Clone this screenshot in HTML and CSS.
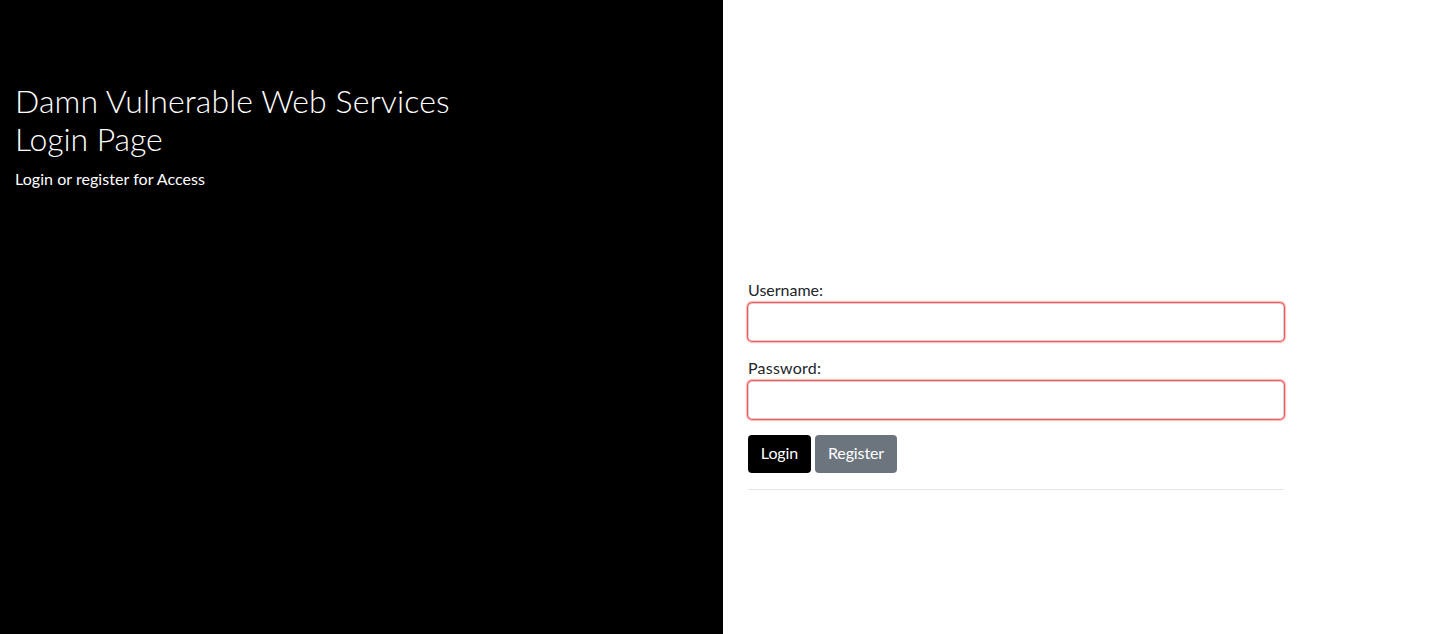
FILE: index.html
```html
<!DOCTYPE html>
<html lang="en">
<head>
<meta charset="utf-8">
<title>Login</title>
<link rel="stylesheet" href="styles.css">
</head>
<body>
<div class="page">
  <aside class="sidenav">
    <h2 class="heading"><span class="heading-main">Damn Vulnerable Web Services</span><br><span class="heading-sub">Login Page</span></h2>
    <p class="lead">Login or register for Access</p>
  </aside>
  <main class="main">
    <form class="login-form">
      <div class="form-group">
        <label for="username">Username:</label>
        <input class="form-control" id="username" type="text" required>
      </div>
      <div class="form-group">
        <label class="label-password" for="password">Password:</label>
        <input class="form-control" id="password" type="password" required>
      </div>
      <div class="actions">
        <button class="btn btn-black" type="submit">Login</button>
        <button class="btn btn-secondary" type="button">Register</button>
      </div>
      <hr class="divider">
    </form>
  </main>
</div>
</body>
</html>
```

FILE: styles.css
```css
* { box-sizing: border-box; }
body {
  margin: 0;
  background: #fff;
  color: #212529;
  font-family: Lato, sans-serif;
  font-size: 16px;
  line-height: 24px;
}
.page { display: flex; height: 634px; overflow: hidden; }
.sidenav {
  width: 723px;
  flex: none;
  padding: 82px 15px 0;
  background: #000;
  color: #fff;
}
.heading {
  margin: 0 0 8px;
  font-size: 32px;
  font-weight: 300;
  line-height: 38.4px;
}
.heading-main { letter-spacing: 0.11px; }
.heading-sub { letter-spacing: -0.08px; }
.lead { margin: 0; letter-spacing: 0.05px; }
.main { padding: 278px 0 0 25px; }
.login-form { width: 536px; }
.form-group { display: flex; flex-direction: column; height: 63px; margin-bottom: 15px; }
label { display: block; height: 25px; }
.label-password { letter-spacing: 0.22px; }
.form-control {
  display: block;
  width: 100%;
  height: 38px;
  margin: 0;
  padding: 6px 12px;
  border: 1px solid #ced4da;
  border-radius: 4px;
  background: #fff;
  font: inherit;
  box-shadow: 0 0 2px 1px rgba(255, 0, 0, 0.9);
}
.actions { display: flex; gap: 4px; padding-top: 1px; }
.btn {
  height: 38px;
  padding: 5px 0 7px;
  border: 0;
  border-radius: 4px;
  color: #fff;
  font: inherit;
  text-align: center;
}
.btn-black { width: 63px; background: #000; letter-spacing: -0.1px; }
.btn-secondary { width: 82px; background: #6c757d; letter-spacing: -0.1px; }
.divider { margin: 16px 0; border: 0; border-top: 1px solid rgba(0, 0, 0, 0.1); }
```
